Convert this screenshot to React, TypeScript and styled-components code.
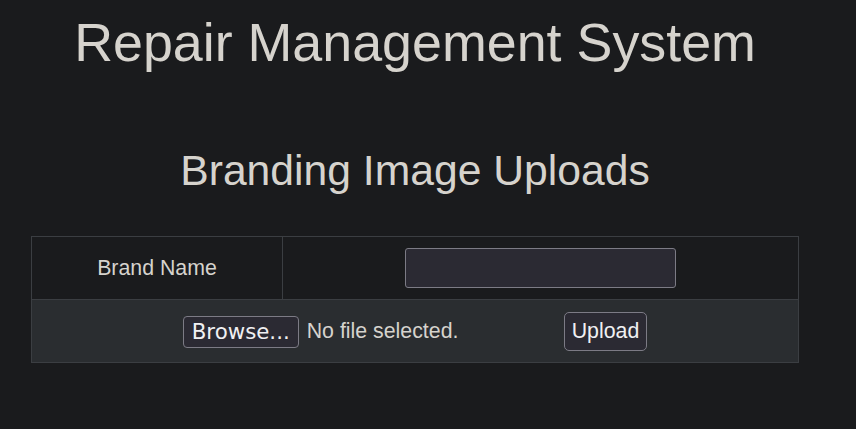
import React from "react";
import styled, { createGlobalStyle } from "styled-components";

const GlobalStyle = createGlobalStyle`
  html, body {
    margin: 0;
    padding: 0;
    background-color: #1a1b1d;
    color: #d6d3cd;
    font-family: "Liberation Sans", Arial, sans-serif;
  }
`;

const Page = styled.div`
  width: 768px;
  margin-left: 31px;
  padding-top: 12px;
  display: flex;
  flex-direction: column;
`;

const Title = styled.h1`
  margin: 0;
  font-size: 53.8px;
  line-height: 61px;
  font-weight: 400;
  text-align: center;
  color: #d6d3cd;
`;

const SectionTitle = styled.h2`
  margin: 73px 0 0;
  font-size: 42.67px;
  line-height: 49px;
  font-weight: 400;
  text-align: center;
  color: #d6d3cd;
`;

const UploadTable = styled.table`
  margin-top: 41px;
  width: 100%;
  border-collapse: collapse;
  border: 1px solid #3b3e42;
  font-size: 21.33px;
`;

const Row = styled.tr<{ $shaded?: boolean }>`
  background-color: ${(p) => (p.$shaded ? "#2a2d30" : "#1a1b1d")};
`;

const Cell = styled.td<{ $width?: number }>`
  border: 1px solid #3b3e42;
  height: 62px;
  padding: 0;
  text-align: center;
  vertical-align: middle;
  width: ${(p) => (p.$width ? `${p.$width}px` : "auto")};
`;

const TextInput = styled.input`
  box-sizing: border-box;
  width: 271px;
  height: 40px;
  background-color: #2b2a33;
  border: 1px solid #7c7b85;
  border-radius: 3px;
  color: #fbfbfe;
  font-size: 21.33px;
  padding: 0 6px;
  outline: none;
`;

const UploadLine = styled.div`
  display: flex;
  align-items: center;
  justify-content: center;
  gap: 5px;
  padding-top: 1px;
`;

const FilePicker = styled.div`
  width: 376px;
  display: flex;
  align-items: center;
  gap: 8px;
`;

const BrowseButton = styled.button`
  box-sizing: border-box;
  height: 32px;
  padding: 0 8px;
  background-color: #2b2a33;
  border: 1px solid #7c7b85;
  border-radius: 4px;
  color: #f0f0f2;
  font-family: "DejaVu Sans", sans-serif;
  font-size: 21.33px;
  line-height: 1;
  cursor: pointer;
`;

const FileStatus = styled.span`
  color: #d6d3cd;
  font-size: 21.33px;
  white-space: nowrap;
`;

const UploadButton = styled.button`
  box-sizing: border-box;
  height: 39px;
  padding: 0 7px;
  background-color: #2b2a33;
  border: 1px solid #7c7b85;
  border-radius: 5px;
  color: #f0f0f2;
  font-family: "Liberation Sans", Arial, sans-serif;
  font-size: 21.33px;
  cursor: pointer;
`;

const App: React.FC = () => {
  return (
    <>
      <GlobalStyle />
      <Page>
        <Title>Repair Management System</Title>
        <SectionTitle>Branding Image Uploads</SectionTitle>

        <UploadTable>
          <tbody>
            <Row>
              <Cell $width={250}>Brand Name</Cell>
              <Cell>
                <TextInput type="text" />
              </Cell>
            </Row>
            <Row $shaded>
              <Cell colSpan={2}>
                <UploadLine>
                  <FilePicker>
                    <BrowseButton type="button">Browse...</BrowseButton>
                    <FileStatus>No file selected.</FileStatus>
                  </FilePicker>
                  <UploadButton type="button">Upload</UploadButton>
                </UploadLine>
              </Cell>
            </Row>
          </tbody>
        </UploadTable>
      </Page>
    </>
  );
};

export default App;
